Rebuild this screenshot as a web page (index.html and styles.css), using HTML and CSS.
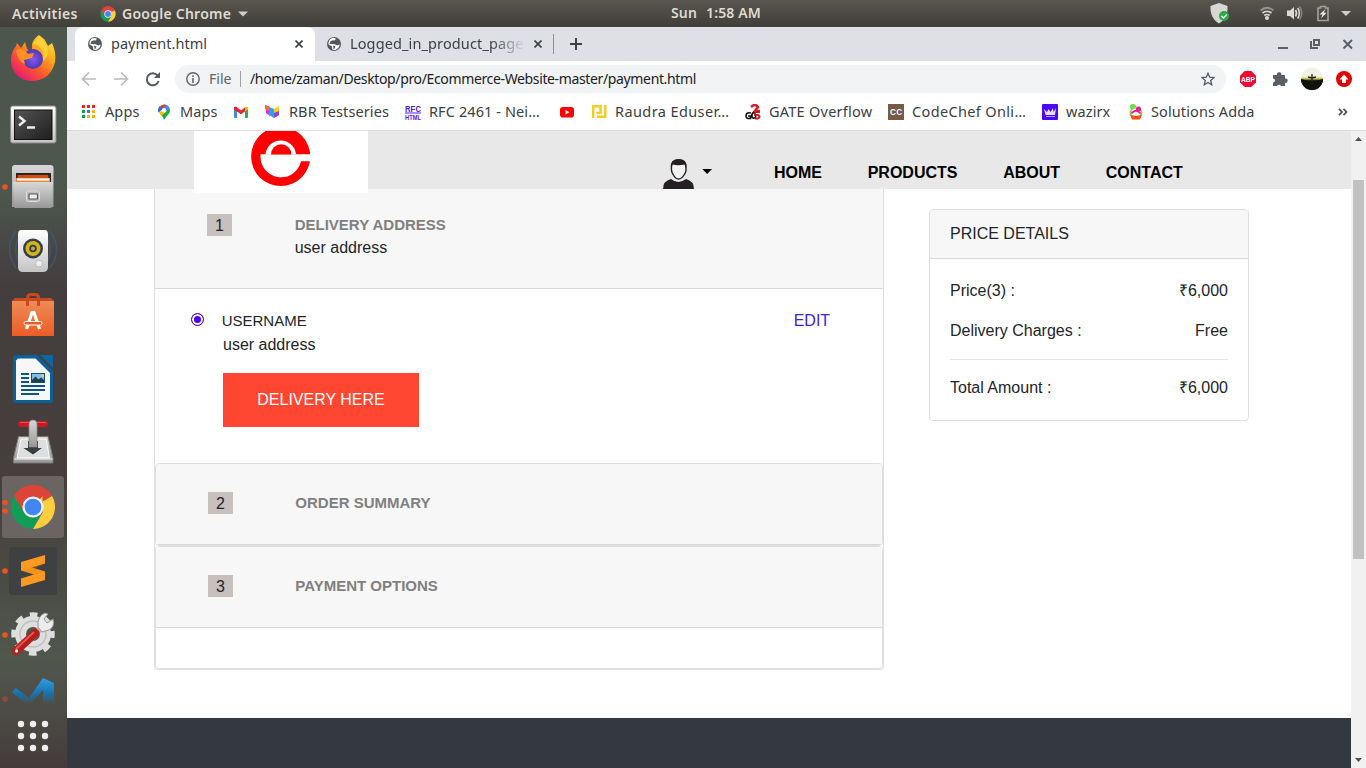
FILE: index.html
```html
<!DOCTYPE html>
<html lang="en">
<head>
<meta charset="utf-8">
<title>payment.html</title>
<link rel="stylesheet" href="styles.css">
</head>
<body>
<svg width="0" height="0" class="defs" aria-hidden="true">
  <defs>
    <linearGradient id="fox" x1="1" y1="0" x2="0.2" y2="1"><stop offset="0" stop-color="#fff44f"/><stop offset=".35" stop-color="#ffae1c"/><stop offset=".65" stop-color="#ff5a2b"/><stop offset="1" stop-color="#e5137a"/></linearGradient>
    <radialGradient id="globe"><stop offset="0" stop-color="#8b54f5"/><stop offset="1" stop-color="#4a3bb0"/></radialGradient>
    <linearGradient id="metal" x1="0" y1="0" x2="0" y2="1"><stop offset="0" stop-color="#d8d8d8"/><stop offset="1" stop-color="#989898"/></linearGradient>
    <linearGradient id="white" x1="0" y1="0" x2="0" y2="1"><stop offset="0" stop-color="#ffffff"/><stop offset="1" stop-color="#c4c4c4"/></linearGradient>
    <linearGradient id="screen" x1="0" y1="0" x2="1" y2="1"><stop offset="0" stop-color="#555"/><stop offset="1" stop-color="#1e1e1e"/></linearGradient>
    <linearGradient id="bag" x1="0" y1="0" x2="0" y2="1"><stop offset="0" stop-color="#ef8b55"/><stop offset="1" stop-color="#ec5c26"/></linearGradient>
    <linearGradient id="code" x1="0" y1="0" x2="0" y2="1"><stop offset="0" stop-color="#2f9fe4"/><stop offset=".6" stop-color="#1772ac"/><stop offset="1" stop-color="#1772ac" stop-opacity="0"/></linearGradient>
    <linearGradient id="sky" x1="0" y1="0" x2="0" y2="1"><stop offset="0" stop-color="#eef2ee"/><stop offset=".4" stop-color="#f4f3d8"/><stop offset=".5" stop-color="#b8b34c"/><stop offset=".58" stop-color="#11130a"/></linearGradient>
    <symbol id="chrome" viewBox="-24 -24 48 48">
      <path d="M0 0L-19.9-11.5A23 23 0 0 1 19.9-11.5Z" fill="#db4437"/>
      <path d="M0 0L-19.9-11.5A23 23 0 0 0 0 23L9 5Z" fill="#0f9d58"/>
      <path d="M0 0L19.9-11.5A23 23 0 0 1 0 23L10 6V-11.5Z" fill="#ffcd40"/>
      <path d="M-19.9-11.5A23 23 0 0 1 19.9-11.5H0L-9.5 5.5Z" fill="#db4437"/>
      <circle r="11" fill="#f4f4f4"/><circle r="8.7" fill="#4285f4"/>
    </symbol>
    <symbol id="earth" viewBox="0 0 16 16">
      <circle cx="8" cy="8" r="7" fill="#55595e"/>
      <path d="M2.4 8.2L6 10.6L6.3 13.4L8.3 14C12 13.4 13.6 11 13.5 8.3L11.4 9.6L8.6 8.3L5 7.9L4.8 6.7L7.6 6.1L8.8 4.5L9.9 2.4L7 1.8C4 2.5 2.2 5 2.4 8.2Z" fill="#fff"/>
      <path d="M3.4 8L8 7.6L9.8 4.7L6.8 4.3L4.2 5.6ZM7.2 9.5L9.5 10.6L8.7 12.6L7.6 13.3Z" fill="#55595e"/>
    </symbol>
  </defs>
</svg>

<div class="desktop">
  <div class="topbar">
    <div class="top-left">
      <span class="activities">Activities</span>
      <svg class="top-chrome" width="16" height="16"><use href="#chrome"/></svg>
      <span class="app-name">Google Chrome</span>
      <svg width="10" height="6" class="top-caret"><path d="M0 .5H10L5 5.5Z" fill="#d0cdc6"/></svg>
    </div>
    <div class="clock"><span>Sun</span><span>1:58 AM</span></div>
    <svg class="tray" width="146" height="26" viewBox="1206 0 146 26">
      <path d="M1219 3L1227.500 6C1228 14 1225 20 1219 23.500C1213 20 1210 14 1210.500 6Z" fill="#d8d6d2"/>
      <circle cx="1224" cy="16" r="5" fill="#2fa84a"/><path d="M1221.500 16L1223.500 18L1226.700 14.500" stroke="#fff" stroke-width="1.300" fill="none"/>
      <g fill="none" stroke="#dcdad5" stroke-width="1.700"><path d="M1260.500 10.500Q1267 5 1273.500 10.500" opacity=".5"/><path d="M1262.500 13Q1267 9.500 1271.500 13"/><path d="M1264.300 15.500Q1267 13.500 1269.700 15.500"/></g><circle cx="1267" cy="18" r="2" fill="#dcdad5"/>
      <path d="M1287 10.500H1290L1294 7V19.500L1290 16H1287Z" fill="#dcdad5"/>
      <g fill="none" stroke="#dcdad5" stroke-width="1.600"><path d="M1295.500 10Q1297.500 13 1295.500 16.500"/><path d="M1297.700 8Q1301 13 1297.700 18.500"/><path d="M1299.600 6.500Q1304 13 1299.600 19.500" opacity=".4"/></g>
      <path d="M1318 8H1320.500V6.500H1325.500V8H1328V20.500H1318Z" fill="none" stroke="#a09e98" stroke-width="1.700"/><path d="M1325.500 9L1319.500 14.500H1322.500L1321 18.500L1326.700 12.800H1323.700Z" fill="#e8e6e2"/>
      <path d="M1341 11H1351L1346 16Z" fill="#d0cdc6"/>
    </svg>
  </div>

  <div class="workspace">
    <div class="dock">
      <svg width="67" height="64" viewBox="0 27 67 64">
        <path d="M39 35L44.500 39.500L48 46L52 43C55 49 56 56 55 62C52 75 43 81 32 81C20 81 11 72 11 60C11 54 13 50 16 46L17 43L21 48L25 42L27 49L32 52V44C33 40 36 37 39 35Z" fill="url(#fox)"/>
        <circle cx="33" cy="59" r="10" fill="url(#globe)"/>
        <path d="M16 51C20 47 25 50 28 54L34 53L32 58L24 60L25 64C21 63 17 57 16 51Z" fill="#ff8f26"/>
        <path d="M33 44C41 45 45 52 43 61C47 58 48 54 48 50L46 44L40 37C36 39 34 42 33 44Z" fill="#ffd83c" opacity=".75"/>
      </svg>
      <svg width="67" height="64" viewBox="0 91 67 64">
        <rect x="10.500" y="106" width="45.500" height="37" rx="2" fill="url(#white)" stroke="#888"/>
        <rect x="14.500" y="110" width="37.500" height="29.500" fill="url(#screen)" stroke="#111"/>
        <path d="M19 116.500L24.500 121L19 125.500M27 127.500H35" fill="none" stroke="#eee" stroke-width="2.400"/>
      </svg>
      <svg width="67" height="64" viewBox="0 155 67 64">
        <circle cx="5" cy="187" r="2.800" fill="#e95420"/>
        <path d="M12 168Q12 165 15 165H50Q53.500 165 53.500 168V207H12Z" fill="url(#metal)"/>
        <path d="M16 173H51V184H16Z" fill="#2b2521"/><path d="M18 175H48L50 184H16Z" fill="#cf4f12"/><path d="M16 178H50V184H16Z" fill="#f0873d"/><path d="M17 178.500H49V180.500H17Z" fill="#fff"/>
        <path d="M13 182H53L51.500 208H14.500Z" fill="url(#metal)"/>
        <rect x="26.500" y="191" width="13" height="10.500" rx="2" fill="#bbb" stroke="#ddd"/><rect x="29" y="194" width="8.500" height="5" rx=".5" fill="#eee" stroke="#555" stroke-width="1.200"/>
      </svg>
      <svg width="67" height="64" viewBox="0 219 67 64">
        <g fill="none" stroke="#3c6898" stroke-width="1.500" opacity=".45"><path d="M16 231Q3 249 16 268"/><path d="M20 235Q11 250 20 264"/><path d="M50 231Q63 249 50 268"/><path d="M46 235Q55 250 46 264"/></g>
        <path d="M21 230H45Q48 230 48 235L48 267Q48 272 43 272H23Q18 272 18 267V235Q18 230 21 230Z" fill="url(#white)"/>
        <circle cx="33" cy="248.500" r="10" fill="#333e48"/><circle cx="33" cy="248.500" r="7.500" fill="#d5b31e"/><circle cx="33" cy="248.500" r="3.800" fill="#3d3d36"/><circle cx="33" cy="248.500" r="2" fill="#b7a661"/><circle cx="39" cy="263.500" r="3.500" fill="#eee" stroke="#bbb"/>
      </svg>
      <svg width="67" height="64" viewBox="0 283 67 64">
        <path d="M12 301L15 298H51L54 301Z" fill="#c94a20"/><path d="M12 301H54V336H12Z" fill="url(#bag)"/>
        <path d="M27.500 306V298Q27.500 294.500 31 294.500H35Q38.500 294.500 38.500 298V306" fill="none" stroke="#c9491d" stroke-width="3"/>
        <path d="M26.500 329L32 312.500H34L39.500 329" fill="none" stroke="#fff" stroke-width="3.200"/><rect x="24" y="321.500" width="18" height="3.500" rx="1.700" fill="#e95a25" stroke="#fff"/>
      </svg>
      <svg width="67" height="64" viewBox="0 347 67 64">
        <path d="M16 355H37L53 371V400Q53 403 50 403H16Q13 403 13 400V358Q13 355 16 355Z" fill="#0b6099"/>
        <path d="M18 358.500H35.500L50 373V400H16V360.500Z" fill="#f7f7f7"/><path d="M40 355H53V368Z" fill="#0b67a5"/>
        <path d="M21 374H29M21 378H29M21 382H29M21 386H45M21 390H45M21 394H39" stroke="#0c5582" stroke-width="2"/>
        <rect x="31.500" y="373.500" width="13" height="9" fill="#80bee6" stroke="#0c5582"/><path d="M32 382V380L35.500 376.500L38.500 379.500L41 377.500L44 380V382Z" fill="#273c49"/><circle cx="42.500" cy="375.500" r="1.500" fill="#ffc83d"/>
      </svg>
      <svg width="67" height="64" viewBox="0 411 67 64">
        <path d="M18.500 436.500H48L53 458V463H13.500V458Z" fill="url(#metal)" stroke="#777"/><path d="M21 439H46L49.500 458H17Z" fill="#dedede" stroke="#fff"/>
        <path d="M14.500 459H52.500" stroke="#f7f7f7"/><path d="M28 441H38V448H42L33 454.500L23.500 448H28Z" fill="#383d40"/>
        <rect x="18" y="421" width="30" height="6" rx="3" fill="#c51b22"/><path d="M20 422.500H46" stroke="#f04b50"/>
        <path d="M29 424Q29 420 33 420Q37 420 37 424V447H29Z" fill="url(#metal)" stroke="#888" stroke-width=".7"/>
      </svg>
      <svg width="67" height="64" viewBox="0 475 67 64">
        <rect x="2" y="476" width="62" height="62" rx="3" fill="#6a6462"/><circle cx="5" cy="502.500" r="2.800" fill="#e95420"/><circle cx="5" cy="511" r="2.800" fill="#e95420"/>
        <use href="#chrome" x="10" y="484" width="46" height="46"/>
      </svg>
      <svg width="67" height="64" viewBox="0 539 67 64">
        <circle cx="5" cy="571" r="2.800" fill="#e95420"/><rect x="9" y="547" width="48" height="48" rx="3" fill="#3e4042"/>
        <path d="M21 562L45 555V563.500L32 567.500L45 571.500V580L21 587V578.500L34 574.500L21 570.500Z" fill="#ff9a20"/><path d="M21 570L45 563.500L34 569L45 572L33 575Z" fill="#d9780b" opacity=".25"/>
      </svg>
      <svg width="67" height="64" viewBox="0 603 67 64">
        <circle cx="5" cy="635" r="2.800" fill="#e95420"/>
        <circle cx="33" cy="634" r="12.500" fill="none" stroke="#dedede" stroke-width="11"/><circle cx="33" cy="634" r="19" fill="none" stroke="#dedede" stroke-width="5.500" stroke-dasharray="7.500 7.420" stroke-dashoffset="3.700"/><circle cx="33" cy="634" r="13" fill="none" stroke="#c0c0c0" stroke-width="1.500"/>
        <path d="M30 640L42 627" stroke="#bbb" stroke-width="6"/><path d="M38 627Q37 616 45 613L48 614L44 619L47 623L53 619Q55 627 49 630L42 632Z" fill="#ececec" stroke="#999"/>
        <path d="M16 651L35.500 633" stroke="#b81b1b" stroke-width="8" stroke-linecap="round"/><path d="M16 649L34 632" stroke="#df5950" stroke-width="2"/><circle cx="16.500" cy="651" r="1.700" fill="#eee"/>
      </svg>
      <svg width="67" height="41" viewBox="0 667 67 41">
        <circle cx="5" cy="699" r="2.800" fill="#8c4c35"/><path d="M12 692L16 688L29 698L43 678L54 683V704H43V690L30 704H25Z" fill="url(#code)"/>
      </svg>
      <svg width="67" height="60" viewBox="0 708 67 60" fill="#eee">
        <circle cx="21" cy="724" r="3.200"/><circle cx="33" cy="724" r="3.200"/><circle cx="45" cy="724" r="3.200"/><circle cx="21" cy="736" r="3.200"/><circle cx="33" cy="736" r="3.200"/><circle cx="45" cy="736" r="3.200"/><circle cx="21" cy="748" r="3.200"/><circle cx="33" cy="748" r="3.200"/><circle cx="45" cy="748" r="3.200"/>
      </svg>
    </div>

    <div class="browser">
      <div class="tabs">
        <div class="tab tab-active">
          <svg width="16" height="16"><use href="#earth"/></svg>
          <span class="tab-title t-payment">payment.html</span>
          <svg class="tab-x" width="8" height="8"><path d="M.5 .5L7.500 7.500M7.500 .5L.5 7.500" stroke="#3c4043" stroke-width="1.600"/></svg>
        </div>
        <div class="tab tab-idle">
          <svg width="16" height="16"><use href="#earth"/></svg>
          <span class="tab-title t-logged">Logged_in_product_page</span>
          <svg class="tab-x" width="8" height="8"><path d="M.5 .5L7.500 7.500M7.500 .5L.5 7.500" stroke="#3c4043" stroke-width="1.600"/></svg>
        </div>
        <svg class="new-tab" width="12" height="12"><path d="M6 0V12M0 6H12" stroke="#3c4043" stroke-width="2"/></svg>
        <svg class="win-controls" width="76" height="34" viewBox="1278 27 76 34" fill="none" stroke="#5b5f64">
          <path d="M1278 48H1288" stroke-width="2"/><path d="M1314 40H1319V45H1314Z" stroke-width="2"/><path d="M1311 41V48H1318" stroke-width="2"/><path d="M1343.500 40L1352 48.500M1352 40L1343.500 48.500" stroke-width="2"/>
        </svg>
      </div>
      <div class="toolbar">
        <svg class="nav-icons" width="80" height="28" viewBox="81 65 80 28" fill="none" stroke-width="1.700">
          <path d="M96 79H83M89 72.500L82.500 79L89 85.500" stroke="#b8babd"/><path d="M114 79H127M121 72.500L127.500 79L121 85.500" stroke="#b8babd"/>
          <path d="M157.500 75.500A6 6 0 1 0 158.600 81" stroke="#55595e" stroke-width="2"/><path d="M160 72V78H154Z" fill="#55595e"/>
        </svg>
        <div class="omnibox">
          <svg width="14" height="14" fill="none" stroke="#5f6368"><circle cx="7" cy="7" r="6.200" stroke-width="1.400"/><path d="M7 6V11M7 3.300V5" stroke-width="1.600"/></svg>
          <span class="scheme">File</span><span class="divider"></span>
          <span class="url">/home/zaman/Desktop/pro/Ecommerce-Website-master/payment.html</span>
          <svg class="star" width="14" height="14" viewBox="0 0 14 14"><path d="M7 1.200L8.700 5.200L13 5.600L9.700 8.400L10.700 12.700L7 10.400L3.300 12.700L4.300 8.400L1 5.600L5.300 5.200Z" fill="none" stroke="#55595e" stroke-width="1.300"/></svg>
        </div>
        <svg class="extensions" width="114" height="28" viewBox="1239 65 114 28">
          <path d="M1244.700 71H1251.300L1256 75.700V82.300L1251.300 87H1244.700L1240 82.300V75.700Z" fill="#f5082f"/><text x="1241" y="82" class="abp" textLength="14" lengthAdjust="spacingAndGlyphs">ABP</text>
          <path d="M1273 75H1277A2.200 2.200 0 1 1 1281.300 75H1285V78.500A2.200 2.200 0 1 1 1285 82.800V86H1281A2.200 2.200 0 0 0 1277 86H1273V82.500A2 2 0 0 0 1273 78.500Z" fill="#5b6066"/>
          <circle cx="1312" cy="79" r="11" fill="url(#sky)"/><path d="M1301 79Q1306 80 1311 82L1323 79A11 11 0 0 1 1301 79Z" fill="#10120c"/><path d="M1312 74V84M1308 77L1312 78L1316 77" stroke="#222" stroke-width="1.300" fill="none"/>
          <circle cx="1344" cy="79" r="8" fill="#e00000"/><path d="M1344 74.500L1348.500 79.500H1346V83H1342V79.500H1339.500Z" fill="#fff"/>
        </svg>
      </div>
      <div class="bookmarks">
        <div class="bm"><svg width="14" height="14" viewBox="0 0 14 14"><path d="M0 0h3v3H0zM5 0h3v3H5z" fill="#ea2222"/><path d="M10 0h3v3h-3z" fill="#ea2222"/><path d="M0 5h3v3H0zM0 10h3v3H0z" fill="#159a4b"/><path d="M5 5h3v3H5z" fill="#2b7de9"/><path d="M10 5h3v3h-3zM5 10h3v3H5zM10 10h3v3h-3z" fill="#f9b208"/></svg><span>Apps</span></div>
        <div class="bm"><svg width="14" height="16" viewBox="0 0 14 16"><path d="M7 .5A6 6 0 0 1 13 6.500C13 10 9 12 7 15.500L4.500 11Z" fill="#14b04b"/><path d="M7.500 15.500C6.500 12.500 4.500 11 3 9.500L10 5L12.500 8.500C11 11 8.500 13 7.500 15.500Z" fill="#14b04b"/><path d="M2 9L8 3.500L10 7L4.500 12Z" fill="#fbbc04"/><path d="M7 .5A6 6 0 0 0 1.500 8L7 4.500L9 1Z" fill="#e33b2e"/><path d="M7 .5A6 6 0 0 1 12.500 4.300L8.500 8L6 4L9 .9Z" fill="#4285f4"/><path d="M1 6.500Q1 4 2.700 2.300L5.300 4.600L1.700 8.800Z" fill="#1a73e8"/><circle cx="7" cy="6.300" r="2.200" fill="#fff"/></svg><span>Maps</span></div>
        <div class="bm"><svg width="14" height="12" viewBox="0 0 14 12"><path d="M0 1.500H3V12H1Q0 12 0 11Z" fill="#4285f4"/><path d="M11 1.500H14V11Q14 12 13 12H11Z" fill="#34a853"/><path d="M0 1.500Q1 0 2.500 1L7 4.500L11.500 1L11.500 5L7 8.300L0 3.500Z" fill="#ea2222"/><path d="M11 1.300Q13 0 14 1.500V3.500L11 5.500Z" fill="#fbbc04"/></svg></div>
        <div class="bm"><svg width="15" height="15" viewBox="0 0 15 15"><path d="M0 1L5 3V12L1 9Z" fill="#d435dd"/><path d="M0 1L5 3V6L1 6Z" fill="#ee6d35"/><path d="M4 3L9 5V14L4 11Z" fill="#22a9ed"/><path d="M9 5L14 2V11L9 14Z" fill="#ffc928"/><path d="M9 9L14 7V11L9 14Z" fill="#8c3ee8"/></svg><span>RBR Testseries</span></div>
        <div class="bm"><svg class="spill" width="16" height="16" viewBox="0 0 16 16"><text x="0" y="7.500" class="rfc" textLength="16" lengthAdjust="spacingAndGlyphs">RFC</text><path d="M0 9H16" stroke="#5014f4"/><text x="0" y="15.500" class="rfc-small" textLength="16" lengthAdjust="spacingAndGlyphs">HTML</text></svg><span>RFC 2461 - Nei…</span></div>
        <div class="bm"><svg width="14" height="12" viewBox="0 0 14 12"><rect y="1" width="14" height="10.500" rx="2.800" fill="#f00"/><path d="M5.500 4L9.500 6.200L5.500 8.500Z" fill="#fff"/></svg></div>
        <div class="bm bm-near"><svg width="15" height="15" viewBox="0 0 15 15" fill="none" stroke="#f6cb21" stroke-width="2.400"><path d="M1.200 14V2.200H8.500V9H4.500"/><path d="M5 12.800H13.300V1"/></svg><span>Raudra Eduser…</span></div>
        <div class="bm"><svg width="16" height="16" viewBox="0 0 16 16" fill="none"><path d="M6 3Q10-1 13 3L10 7H15" stroke="#d82129" stroke-width="2.500"/><path d="M15 8H10V11H13Q16 12 13 14.500H10" stroke="#c91d28" stroke-width="2"/><path d="M6 9Q1 8 1 12Q1 15 5.500 14.500V12H3M9 8Q6 10 7 13Q9 16 11 12" stroke="#111" stroke-width="1.600"/></svg><span>GATE Overflow</span></div>
        <div class="bm"><svg width="16" height="16" viewBox="0 0 16 16"><rect width="16" height="16" fill="#765b47"/><text x="2" y="11.300" class="cc" textLength="12.500" lengthAdjust="spacingAndGlyphs">CC</text></svg><span>CodeChef Onli…</span></div>
        <div class="bm"><svg width="16" height="16" viewBox="0 0 16 16"><rect width="16" height="16" rx="1" fill="#4c05f5"/><path d="M2 5L5 8L6.500 5L8.500 8L11 4L11.500 8L14 4L13 11H3.500Z" fill="#e5ddff"/><path d="M4 12.500H13" stroke="#a8a0ff"/></svg><span>wazirx</span></div>
        <div class="bm bm-solutions"><svg width="15" height="16" viewBox="0 0 15 16"><circle cx="4" cy="3" r="3" fill="#64dc42"/><circle cx="7" cy="9" r="5.500" fill="#fff" stroke="#8ed55b" stroke-width="2"/><circle cx="9.500" cy="5" r="2.500" fill="#f11598"/><path d="M2.500 9.500Q7 4 11.500 9.500" fill="none" stroke="#f11598" stroke-width="1.800"/><path d="M1 10.500Q7 13 13 10.500L11 15.500H3Z" fill="#f35316"/></svg><span>Solutions Adda</span></div>
        <svg width="10" height="8" viewBox="0 0 10 8" fill="none" stroke="#4a4d51" stroke-width="1.700"><path d="M1 .8L4 4L1 7.200M5.500 .8L8.500 4L5.500 7.200"/></svg>
      </div>

      <div class="viewport">
        <div class="page">
          <header class="site-header">
            <div class="brand"><svg width="174" height="62" viewBox="194 131 174 62"><circle cx="280.700" cy="156.500" r="29.600" fill="#f00"/><path d="M260.500 154.300H312V161.300H301A20.500 20.500 0 0 1 260.500 157Z" fill="#fff"/><path d="M265.500 154.500A15.300 15.300 0 0 1 296 154.500Z" fill="#fff"/><path d="M271 154.500A10.200 10.200 0 0 1 291.400 154.500Z" fill="#f00"/></svg></div>
            <svg class="user" width="50" height="31" viewBox="663 158 50 31"><path d="M663 189Q663 181 671 179Q678 185 686 179Q694 181 694 189Z" fill="#231f22"/><path d="M671.500 167Q671.500 160 678.500 160Q686 160 686 167Q686.500 172 684 175Q681.500 179 678.500 179Q675.500 179 673.500 175Q671 172 671.500 167Z" fill="#f2f2f2" stroke="#222" stroke-width="1.300"/><path d="M671 169Q669.500 159 678.500 159Q688 159 686 169L684.500 164.500Q678 166 672.500 164.500Z" fill="#231f20"/><path d="M702.300 169H712L707.200 174Z" fill="#000"/></svg>
            <nav class="menu"><a>HOME</a><a>PRODUCTS</a><a>ABOUT</a><a>CONTACT</a></nav>
          </header>
          <main class="content">
            <section class="steps">
              <div class="step-head step-first"><span class="num">1</span><div><h2>DELIVERY ADDRESS</h2><p>user address</p></div></div>
              <div class="address">
                <span class="radio"></span>
                <div class="address-main"><div class="username">USERNAME</div><div class="addr">user address</div><button class="deliver">DELIVERY HERE</button></div>
                <a class="edit">EDIT</a>
              </div>
              <div class="subcard"><div class="step-head"><span class="num">2</span><h2>ORDER SUMMARY</h2></div></div>
              <div class="subcard"><div class="step-head"><span class="num">3</span><h2>PAYMENT OPTIONS</h2></div><div class="blank"></div></div>
            </section>
            <aside class="price">
              <div class="price-head">PRICE DETAILS</div>
              <div class="price-body">
                <div class="row"><span>Price(3) :</span><span>₹6,000</span></div>
                <div class="row"><span>Delivery Charges :</span><span>Free</span></div>
                <div class="rule"></div>
                <div class="row"><span>Total Amount :</span><span>₹6,000</span></div>
              </div>
            </aside>
          </main>
          <footer class="footer"></footer>
        </div>
        <div class="scrollbar">
          <svg width="15" height="49" viewBox="0 0 15 49"><path d="M4 10H11L7.500 6Z" fill="#505050"/></svg>
          <div class="thumb"></div>
          <svg class="down" width="15" height="16"><path d="M4 6H11L7.500 10Z" fill="#505050"/></svg>
        </div>
      </div>
    </div>
  </div>
</div>
</body>
</html>
```
FILE: styles.css
```css
* { box-sizing: border-box; }
body { margin: 0; overflow: hidden; font-family: "Liberation Sans", Arial, sans-serif; font-size: 16px; line-height: 24px; color: #212529; }
svg { display: block; flex: none; }
.defs { position: absolute; }
.spill { overflow: visible; }
h2, p { margin: 0; }
.desktop { width: 1366px; height: 768px; display: flex; flex-direction: column; overflow: hidden; }

.topbar { height: 27px; flex: none; background: linear-gradient(#59564e, #403e39); display: flex; justify-content: space-between; color: #dfdbd2; font: 600 14px/26px "Noto Sans", sans-serif; padding: 0 14px 0 12px; white-space: nowrap; }
.top-left { display: flex; align-items: center; width: 659px; }
.activities { width: 88px; letter-spacing: 0.32px; }
.app-name { width: 112px; margin-left: 6px; letter-spacing: 0.25px; }
.top-caret { margin-left: 4px; }
.clock { display: flex; gap: 9px; width: 535px; letter-spacing: 0.15px; }
.tray { height: 26px; }

.workspace { display: flex; flex: 1; min-height: 0; }
.dock { width: 67px; flex: none; background: linear-gradient(#4c564d 0, #4d574e 22%, #484846 29%, #433d3d 36%, #463f3e 62%, #4a4c44 75%, #51574d 85%, #4b4843 94%, #433b3b 100%); }
.browser { flex: 1; display: flex; flex-direction: column; background: #fff; }
.tabs { height: 34px; flex: none; background: #dee0e6; display: flex; align-items: center; padding-left: 8px; font: 14.5px/20px "Noto Sans", sans-serif; color: #3c4043; }
.tab { display: flex; align-items: center; height: 34px; white-space: nowrap; }
.tab-active { width: 240px; background: #fff; border-radius: 8px 8px 0 0; padding-left: 12px; }
.tab-idle { width: 239px; border-right: 1px solid #8b8e94; height: 20px; padding-left: 11px; }
.tab-title { margin: 0 0 2px 8px; width: 176px; overflow: hidden; }
.tab-x { margin-left: 8px; }
.t-payment { letter-spacing: 0.03px; }
.t-logged { letter-spacing: 0.12px; -webkit-mask-image: linear-gradient(90deg, #000 80%, transparent); mask-image: linear-gradient(90deg, #000 80%, transparent); }
.new-tab { margin-left: 16px; }
.win-controls { margin-left: auto; margin-right: 12px; }

.toolbar { height: 36px; flex: none; padding: 4px 13px 4px 14px; display: flex; }
.omnibox { width: 1051px; height: 28px; margin-left: 14px; border-radius: 14px; background: #f1f3f4; display: flex; align-items: center; padding: 0 11px; font: 14px/20px "Noto Sans", sans-serif; white-space: nowrap; }
.scheme { margin-left: 9px; width: 31px; color: #5f6368; }
.divider { width: 1px; height: 16px; background: #9aa0a6; }
.url { margin-left: 9px; color: #202124; letter-spacing: -0.36px; }
.star { margin-left: auto; }
.extensions { margin-left: 13px; }
.abp { font: 700 8px "Liberation Sans", sans-serif; fill: #fff; }

.bookmarks { height: 34px; flex: none; border-bottom: 1px solid #dcdce2; padding: 0 0 4px 15px; display: grid; grid-template-columns: 75px 77px 31px 140px 155px 32px 153px 143px 154px 87px 209px 10px; align-items: center; font: 14.5px/20px "Noto Sans", sans-serif; letter-spacing: 0.1px; color: #3c4043; white-space: nowrap; }
.bm { display: grid; grid-template-columns: 24px 1fr; align-items: center; }
.bm span { margin-bottom: 2px; }
.bm:nth-child(-n+2) { grid-template-columns: 23px 1fr; }
.bm-near { grid-template-columns: 23px 1fr; letter-spacing: 0.4px; }
.bm:nth-child(9) { letter-spacing: 0.35px; }
.bm:nth-child(8) { letter-spacing: 0.25px; }
.bm-solutions { grid-template-columns: 22px 1fr; }
.rfc { font: 700 8.5px "Liberation Sans", sans-serif; fill: #5014f4; }
.rfc-small { font: 700 6.5px "Liberation Sans", sans-serif; fill: #5014f4; }
.cc { font: 700 9.5px "Liberation Sans", sans-serif; fill: #fff; }

.viewport { flex: 1; display: flex; min-height: 0; }
.page { width: 1284px; display: flex; flex-direction: column; }
.site-header { height: 58px; flex: none; background: #e8e8e8; display: flex; align-items: flex-start; padding-left: 127px; z-index: 1; }
.brand { width: 174px; height: 62px; background: #fff; }
.user { margin: 27px 0 0 295px; }
.menu { display: flex; gap: 45.7px; margin: 30px 0 0 61px; font-weight: 700; color: #000; }
.content { flex: 1; display: flex; align-items: flex-start; padding-left: 87px; }
.steps { width: 730px; height: 481px; border: 1px solid #dfdfdf; border-top: 0; border-radius: 0 0 4px 4px; }
.step-head { display: flex; background: #f7f7f7; border-bottom: 1px solid #d8d8d8; height: 81px; padding: 28px 0 0 52px; }
.step-first { height: 100px; padding-top: 25px; }
.num { width: 25px; height: 22px; margin-right: 62.3px; background: #c8bfbf; text-align: center; line-height: 23px; flex: none; }
.step-first .num { margin-right: 62.7px; }
.step-head h2 { font-size: 15px; line-height: 22px; color: #808080; }
.step-first p { line-height: 23px; }
.address { height: 174px; display: flex; padding-left: 36px; }
.radio { width: 13px; height: 13px; border: 1px solid #4b00f5; border-radius: 50%; background: #4b00f5; box-shadow: inset 0 0 0 2px #fff; margin-top: 24px; }
.address-main { margin-left: 17.7px; width: 572px; }
.username { font-size: 15px; margin-top: 20px; }
.addr { margin-left: 1.3px; }
.deliver { display: block; margin: 16px 0 0 1.3px; width: 196px; height: 54px; border: 0; background: #ff4630; color: #fff; font: 16px "Liberation Sans", sans-serif; padding: 0; }
.edit { margin-top: 20px; color: #3d22e0; }
.subcard { border: 1px solid #dfdfdf; border-radius: 4px; overflow: hidden; background: #fff; }
.blank { height: 40px; }
.price { width: 320px; height: 212px; margin: 20px 0 0 45px; border: 1px solid #dfdfdf; border-radius: 4px; overflow: hidden; }
.price-head { height: 49px; padding: 12px 20px; background: #f7f7f7; border-bottom: 1px solid #d8d8d8; }
.price-body { padding: 20px; }
.row { display: flex; justify-content: space-between; margin-bottom: 16px; }
.rule { height: 1px; background: #e5e5e5; margin-bottom: 16px; }
.footer { height: 50px; flex: none; background: #343840; }
.scrollbar { width: 15px; background: #f1f1f1; display: flex; flex-direction: column; }
.thumb { height: 379px; width: 11px; margin-left: 2px; background: #c1c1c1; }
.down { margin-top: auto; }
```
